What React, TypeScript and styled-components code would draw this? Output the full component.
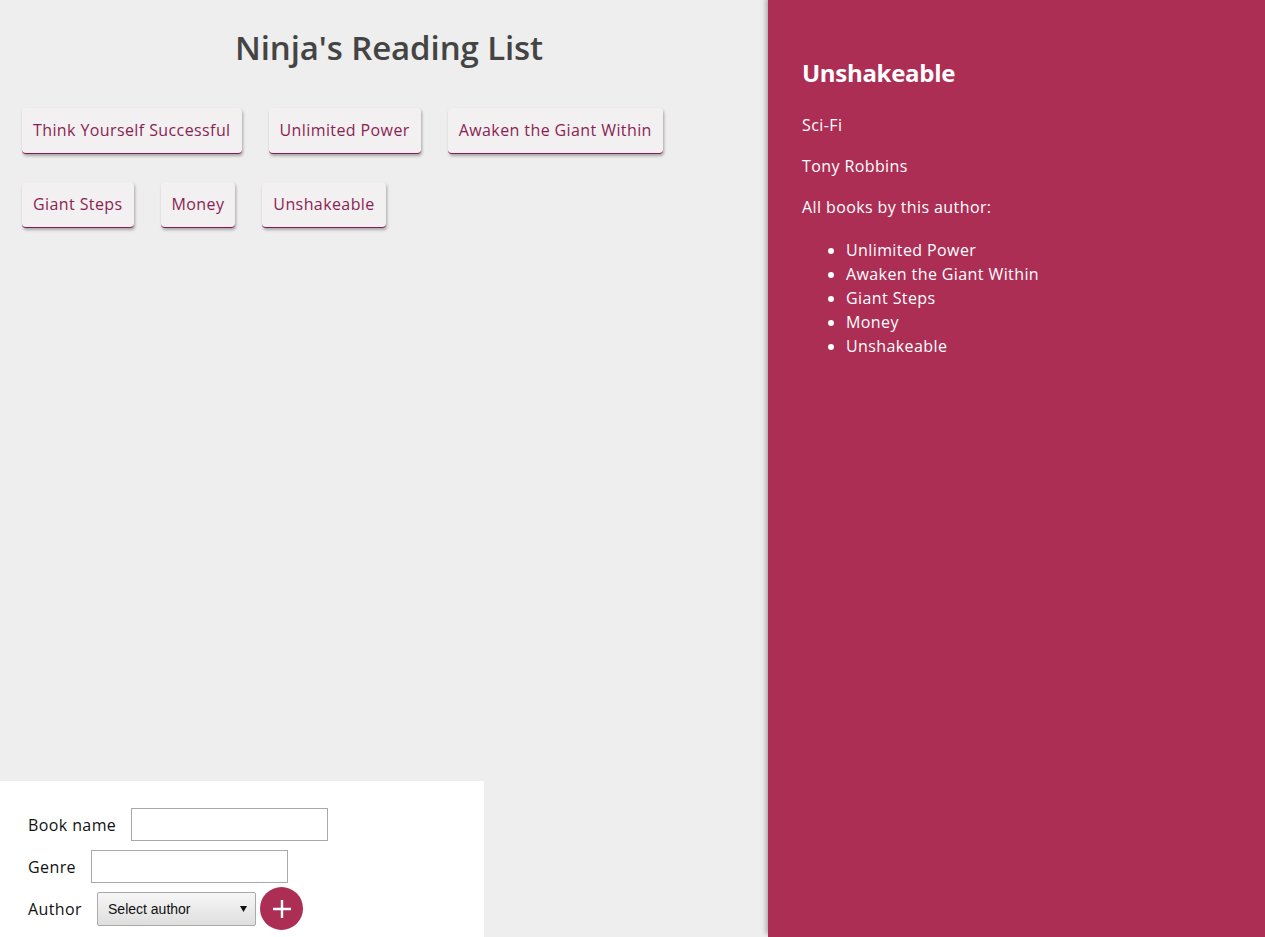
import React from 'react';
import styled, { createGlobalStyle } from 'styled-components';

const GlobalStyle = createGlobalStyle`
  html, body {
    margin: 0;
    padding: 0;
    height: 100%;
  }
  body {
    background: #eee;
    font-family: "Open Sans", Lato, sans-serif;
    font-size: 16px;
    letter-spacing: 0.4px;
  }
  #root {
    height: 100%;
  }
`;

const Page = styled.div`
  display: flex;
  height: 937px;
  overflow: hidden;
`;

const Main = styled.div`
  position: relative;
  width: 768px;
  flex-shrink: 0;
  display: flex;
  flex-direction: column;
`;

const Title = styled.h1`
  margin: 27px 0 0;
  padding-left: 10px;
  text-align: center;
  color: #444;
  font-size: 33px;
  font-weight: 600;
  line-height: 42px;
  letter-spacing: -0.1px;
`;

const BookList = styled.ul`
  list-style: none;
  margin: 0;
  padding: 39px 22px 0;
  display: flex;
  flex-wrap: wrap;
  column-gap: 27px;
  row-gap: 28px;
  max-width: 700px;
`;

const BookItem = styled.li`
  padding: 11px 11px 12px;
  line-height: 22px;
  background: #f2f0f0;
  border-radius: 4px;
  border-bottom: 1px solid #8a1a50;
  box-shadow: 1px 2px 3px rgba(0, 0, 0, 0.3);
  color: #8a1f55;
  cursor: pointer;
`;

const Form = styled.form`
  margin-top: auto;
  width: 484px;
  box-sizing: border-box;
  background: #fff;
  padding: 27px 20px 12px 28px;
  display: flex;
  flex-direction: column;
  gap: 9px;
`;

const Field = styled.div`
  display: flex;
  align-items: center;
  height: 33px;
  gap: 15px;
`;

const Label = styled.label`
  color: #111;
  line-height: 22px;
`;

const TextInput = styled.input`
  width: 197px;
  height: 33px;
  box-sizing: border-box;
  border: 1px solid #a9a9a9;
  padding: 6px;
  font-size: 14px;
`;

const Select = styled.select`
  width: 159px;
  height: 34px;
  box-sizing: border-box;
  border: 1px solid #a9a9a9;
  border-radius: 2px;
  font-family: "Liberation Sans", Arial, sans-serif;
  font-size: 14px;
  letter-spacing: 0;
  padding: 0 10px;
  color: #111;
  appearance: none;
  background-image: url("data:image/svg+xml;utf8,<svg xmlns='http://www.w3.org/2000/svg' width='7' height='6'><path d='M0 0h7L3.5 6z' fill='%23111'/></svg>"), linear-gradient(#f7f7f7, #dedede);
  background-repeat: no-repeat, no-repeat;
  background-position: right 8px center, 0 0;
`;

const AddButton = styled.button`
  flex-shrink: 0;
  width: 43px;
  height: 43px;
  margin-left: -11px;
  border-radius: 50%;
  border: 0;
  background: #ad2e55;
  color: #fff;
  display: flex;
  align-items: center;
  justify-content: center;
  padding: 0;
  cursor: pointer;
`;

const Details = styled.div`
  flex: 1;
  background: #ad2e55;
  color: #fff;
  padding: 36px 30px 30px 34px;
  box-shadow: -2px -3px 5px rgba(0, 0, 0, 0.3);
  position: relative;
  z-index: 1;
`;

const DetailTitle = styled.h2`
  margin: 22px 0 0;
  font-size: 24px;
  font-weight: 700;
  line-height: 30px;
  letter-spacing: -0.3px;
`;

const DetailText = styled.p`
  margin: 19px 0 0;
  line-height: 22px;
  &:first-of-type {
    margin-top: 26px;
  }
`;

const AuthorBooks = styled.ul`
  margin: 20px 0 0;
  padding-left: 44px;
  li {
    line-height: 24px;
  }
`;

const books = [
  'Think Yourself Successful',
  'Unlimited Power',
  'Awaken the Giant Within',
  'Giant Steps',
  'Money',
  'Unshakeable',
];

const authorBooks = ['Unlimited Power', 'Awaken the Giant Within', 'Giant Steps', 'Money', 'Unshakeable'];

export default function App() {
  return (
    <>
      <GlobalStyle />
      <Page>
        <Main>
          <Title>Ninja's Reading List</Title>
          <BookList>
            {books.map(b => <BookItem key={b}>{b}</BookItem>)}
          </BookList>
          <Form onSubmit={e => e.preventDefault()}>
            <Field>
              <Label>Book name</Label>
              <TextInput type="text" />
            </Field>
            <Field>
              <Label>Genre</Label>
              <TextInput type="text" />
            </Field>
            <Field>
              <Label>Author</Label>
              <Select defaultValue="">
                <option value="">Select author</option>
                <option>Tony Robbins</option>
              </Select>
              <AddButton type="submit">
                <svg width="20" height="20" viewBox="0 0 20 20">
                  <path d="M10 1v18M1 10h18" stroke="#fff" strokeWidth="2.4" />
                </svg>
              </AddButton>
            </Field>
          </Form>
        </Main>
        <Details>
          <DetailTitle>Unshakeable</DetailTitle>
          <DetailText>Sci-Fi</DetailText>
          <DetailText>Tony Robbins</DetailText>
          <DetailText>All books by this author:</DetailText>
          <AuthorBooks>
            {authorBooks.map(b => <li key={b}>{b}</li>)}
          </AuthorBooks>
        </Details>
      </Page>
    </>
  );
}
